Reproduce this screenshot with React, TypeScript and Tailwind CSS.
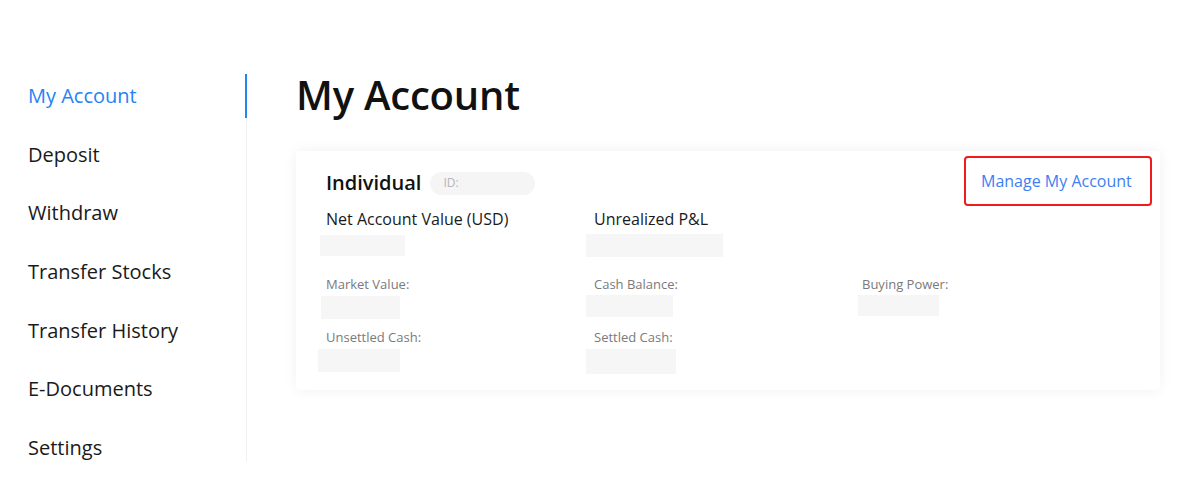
const navItems = [
  "My Account",
  "Deposit",
  "Withdraw",
  "Transfer Stocks",
  "Transfer History",
  "E-Documents",
  "Settings",
];

const Placeholder = ({ className }: { className: string }) => (
  <div className={`bg-[#f6f6f6] ${className}`} />
);

export default function App() {
  return (
    <div
      className="w-[1194px] h-[479px] bg-white flex overflow-hidden text-[#1a1a1a]"
      style={{ fontFamily: '"Open Sans", "Noto Sans", sans-serif' }}
    >
      {/* Sidebar */}
      <aside className="w-[247px] shrink-0 pt-[74px]">
        <nav className="h-[388px] border-r border-[#eef0f4] flex flex-col gap-[14.67px]">
          {navItems.map((label, i) => (
            <div key={label} className="relative h-11 shrink-0 flex items-center pl-[28px]">
              <span className={`text-[20px] leading-7 ${i === 0 ? "text-[#2583f4]" : "text-[#1a1a1a]"}`}>
                {label}
              </span>
              {i === 0 && <span className="absolute right-[-1px] top-0 h-11 w-[2px] bg-[#2583f4]" />}
            </div>
          ))}
        </nav>
      </aside>

      {/* Main */}
      <main className="flex-1 pl-[49px] pt-[68px]">
        <h1 className="text-[40px] leading-[54px] font-semibold tracking-[-0.2px] text-[#111]">My Account</h1>

        <section className="relative mt-[29px] w-[864px] bg-white rounded-[4px] shadow-[0_0_14px_rgba(0,0,0,0.06)] pl-[30px] pr-[30px] pt-[18px] pb-[16px]">
          <div className="flex items-center h-7">
            <span className="text-[20px] font-semibold text-[#111]">Individual</span>
            <span className="ml-[9px] w-[105px] h-[23px] rounded-full bg-[#f5f5f5] pl-[13px] flex items-center text-[12px] text-[#b5b5b5]">
              ID:
            </span>
          </div>

          <a className="absolute top-[5px] right-[8px] w-[188px] h-[50px] border-[2.5px] border-[#f01c1c] rounded-[4px] pl-[15px] flex items-center text-[16px] text-[#3d7ff2]">
            Manage My Account
          </a>

          <div className="mt-[10px] grid grid-cols-[268px_1fr]">
            <div>
              <div className="text-[16px] leading-6 text-[#1a1a1a]">Net Account Value (USD)</div>
              <Placeholder className="mt-[4px] -ml-[6px] w-[85px] h-[21px]" />
            </div>
            <div>
              <div className="text-[16px] leading-6 text-[#1a1a1a]">Unrealized P&amp;L</div>
              <Placeholder className="mt-[3px] -ml-[8px] w-[137px] h-[23px]" />
            </div>
          </div>

          <div className="mt-[18px] grid grid-cols-[268px_268px_1fr] text-[13px] leading-[18px] text-[#7a7a7a]">
            <div>
              <div>Market Value:</div>
              <Placeholder className="mt-[3px] -ml-[5px] w-[79px] h-[23px]" />
            </div>
            <div>
              <div>Cash Balance:</div>
              <Placeholder className="mt-[2px] -ml-[8px] w-[87px] h-[22px]" />
            </div>
            <div>
              <div>Buying Power:</div>
              <Placeholder className="mt-[2px] -ml-[4px] w-[81px] h-[21px]" />
            </div>

            <div className="mt-[9px]">
              <div>Unsettled Cash:</div>
              <Placeholder className="mt-[3px] -ml-[8px] w-[82px] h-[23px]" />
            </div>
            <div className="mt-[9px]">
              <div>Settled Cash:</div>
              <Placeholder className="mt-[3px] -ml-[8px] w-[90px] h-[25px]" />
            </div>
          </div>
        </section>
      </main>
    </div>
  );
}
